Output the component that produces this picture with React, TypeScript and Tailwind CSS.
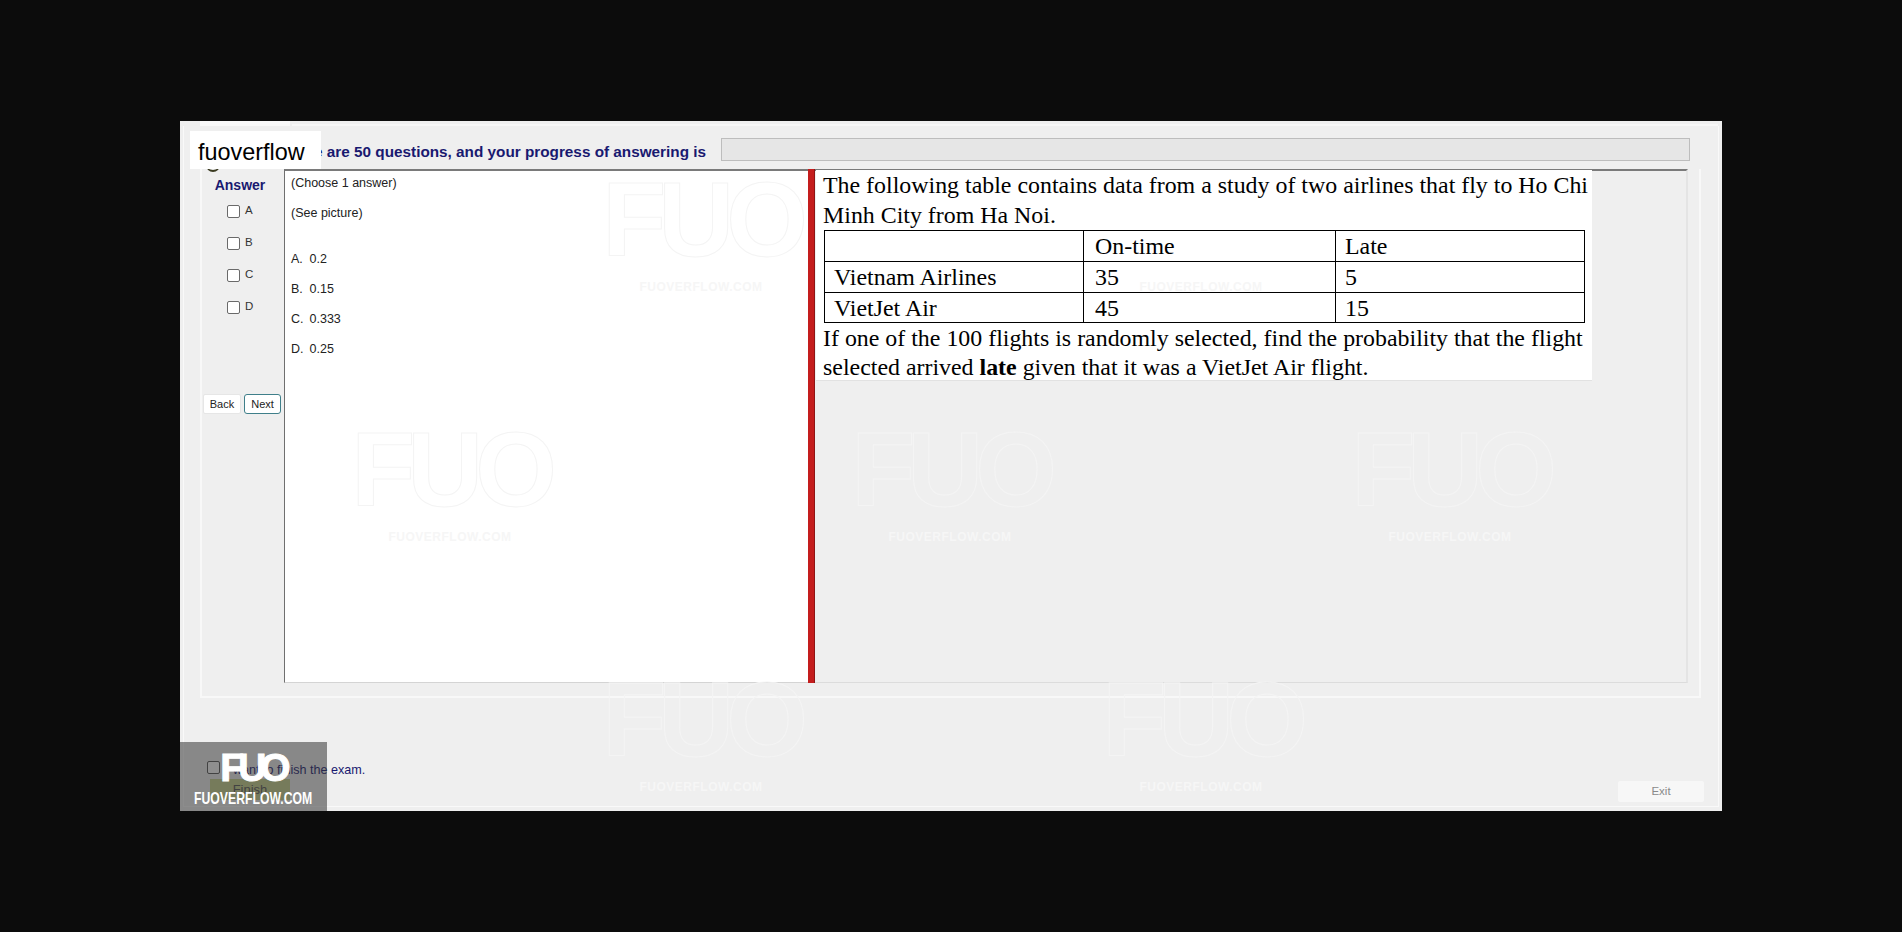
const arial = "font-['Liberation_Sans',Arial,sans-serif]";

function Watermark({ className, labelOnly }: { className: string; labelOnly?: boolean }) {
  return (
    <div className={`absolute w-[200px] flex flex-col items-center justify-end h-[125px] pointer-events-none select-none ${className}`}>
      {!labelOnly && (
        <span className="font-['Liberation_Sans',sans-serif] font-bold text-[105px] leading-[100px] tracking-[-8px] text-transparent [-webkit-text-stroke:1px_#f4f4f4]">
          FUO
        </span>
      )}
      <span className="font-['Liberation_Sans',sans-serif] font-bold text-[12px] leading-4 mt-[9px] tracking-[0.5px] text-[#f6f6f6]">
        FUOVERFLOW.COM
      </span>
    </div>
  );
}

function AnswerOption({ label }: { label: string }) {
  return (
    <div className="h-8 flex items-center gap-[5px] pl-[25px]">
      <span className="w-[13px] h-[13px] rounded-[2px] border border-[#6a6a6a] bg-white" />
      <span className="text-[11.5px] text-[#333]">{label}</span>
    </div>
  );
}

export default function App() {
  const choices = [
    ["A.", "0.2"],
    ["B.", "0.15"],
    ["C.", "0.333"],
    ["D.", "0.25"],
  ];

  return (
    <div className="min-h-[932px] bg-[#0c0c0c] pt-[121px] pl-[180px]">
      <div className={`relative w-[1542px] h-[690px] bg-[#efefef] flex flex-col overflow-hidden ${arial}`}>
        {/* tab strip */}
        <div className="h-[5px] flex items-end gap-[2px] pl-5 shrink-0">
          <div className="h-[5px] w-[90px] bg-[#f9f9f9]" />
          <div className="h-[2px] flex-1 mr-[4px] bg-[#f7f7f7]" />
        </div>

        {/* header row */}
        <div className="h-[23px] mt-[12px] flex items-center justify-end pr-[32px] gap-[15px] shrink-0">
          <span className="text-[15.3px] mt-[6px] font-bold text-[#191970] whitespace-nowrap">
            There are 50 questions, and your progress of answering is
          </span>
          <div className="w-[969px] h-[23px] bg-[#e6e6e6] border border-[#bdbdbd]" />
        </div>

        {/* main group box */}
        <div className="mx-[20px] mt-[8px] w-[1501px] h-[529px] border-b-2 border-r-2 border-l-2 border-[#f8f8f8] flex shrink-0">
          <div className="w-[82px] shrink-0 flex flex-col">
            <div className="text-[14px] font-bold text-[#191970] text-center pr-[6px] pt-[6px] h-[26px]">Answer</div>
            <div className="flex flex-col">
              {["A", "B", "C", "D"].map((label) => (
                <AnswerOption key={label} label={label} />
              ))}
            </div>
            <div className="mt-[71px] flex gap-[3px] pl-[1px]">
              <button className="w-[38px] h-[20px] bg-white rounded-[2px] border border-[#e6e6e6] text-[11px] text-[#222]">Back</button>
              <button className="w-[37px] h-[20px] bg-white rounded-[3px] border border-[#3f7f8a] text-[11px] text-[#222]">Next</button>
            </div>
          </div>

          <div className="w-[524px] h-[514px] shrink-0 bg-white border-l border-t-2 border-t-[#7a7a7a] border-l-[#6f6f6f] border-b border-b-[#d4d4d4] pl-[6px] text-[12.5px] text-[#222]">
            <p className="leading-[15px] mt-[5px]">(Choose 1 answer)</p>
            <p className="leading-[15px] mt-[15px]">(See picture)</p>
            <div className="mt-[31px] flex flex-col gap-[15px]">
              {choices.map(([letter, value]) => (
                <p key={letter} className="leading-[15px] flex">
                  <span className="w-[18.5px]">{letter}</span>
                  <span>{value}</span>
                </p>
              ))}
            </div>
          </div>

          <div className="w-[7px] h-[514px] shrink-0 bg-[#c41d1d] border-r border-r-[#8f1414]" />

          <div className="w-[873px] h-[514px] shrink-0 border-t-2 border-t-[#7a7a7a] border-r-2 border-r-[#e4e4e4] border-b border-b-[#dcdcdc]">
            <div className="w-[776px] h-[211px] bg-white ml-[1px] pl-[7px] pr-[7px] border-b border-[#e2e2e2] font-['Liberation_Serif','Times_New_Roman',serif] text-[23.9px] leading-[30px] text-black">
              <p className="whitespace-nowrap -mt-px">The following table contains data from a study of two airlines that fly to Ho Chi</p>
              <p className="whitespace-nowrap">Minh City from Ha Noi.</p>
              <table className="w-[761px] ml-[1px] border-collapse border border-black table-fixed leading-[28px]">
                <tbody>
                  <tr className="h-[31px]">
                    <td className="w-[259px] border border-black pl-[9px]"></td>
                    <td className="w-[252px] border border-black pl-[11px]">On-time</td>
                    <td className="border border-black pl-[9px]">Late</td>
                  </tr>
                  <tr className="h-[31px]">
                    <td className="border border-black pl-[9px]">Vietnam Airlines</td>
                    <td className="border border-black pl-[11px]">35</td>
                    <td className="border border-black pl-[9px]">5</td>
                  </tr>
                  <tr className="h-[30px]">
                    <td className="border border-black pl-[9px]">VietJet Air</td>
                    <td className="border border-black pl-[11px]">45</td>
                    <td className="border border-black pl-[9px]">15</td>
                  </tr>
                </tbody>
              </table>
              <p className="whitespace-nowrap">If one of the 100 flights is randomly selected, find the probability that the flight</p>
              <p className="whitespace-nowrap -mt-px">selected arrived <b>late</b> given that it was a VietJet Air flight.</p>
            </div>
          </div>
        </div>

        {/* bottom row */}
        <div className="flex-1 flex items-end justify-between pl-[27px] pr-[18px] pb-[9px]">
          <div className="flex flex-col gap-[2px] mb-[2px]">
            <label className="flex items-center gap-[6px] text-[12.6px] text-[#191970]">
              <span className="w-[13px] h-[13px] rounded-[2px] border border-[#555] bg-white" />
              <span className="translate-y-[3px]">I want to finish the exam.</span>
            </label>
            <button className="w-[80px] h-[21px] ml-[3px] bg-[#c8d28c] text-[13px] text-[#555]">Finish</button>
          </div>
          <button className="w-[86px] h-[21px] bg-[#f7f7f7] rounded-[2px] text-[11.5px] text-[#8a8a8a]">Exit</button>
        </div>

        {/* window edge line */}
        <div className="absolute left-[3px] right-[3px] top-[5px] bottom-[4px] border-l border-r border-b border-[#f9f9f9] pointer-events-none" />

        {/* fuoverflow overlays */}
        <Watermark className="left-[421px] top-[49px]" />
        <Watermark className="left-[170px] top-[299px]" />
        <Watermark className="left-[670px] top-[299px]" />
        <Watermark className="left-[1170px] top-[299px]" />
        <Watermark className="left-[921px] top-[49px]" labelOnly />
        <Watermark className="left-[421px] top-[549px]" />
        <Watermark className="left-[921px] top-[549px]" />

        <div className="absolute left-[26px] top-[36px] w-[14px] h-[15px] rounded-full border-b-2 border-[#3a3a20]" />
        <div className="absolute left-[10px] top-[10px] w-[131px] h-[38px] bg-white flex items-center pl-[8px] pt-[6px] text-[23.4px] text-black">
          fuoverflow
        </div>

        <div className="absolute left-0 bottom-0 w-[147px] h-[69px] bg-[#333333]/55 flex flex-col items-center">
          <span className="font-bold text-[39px] leading-[40px] tracking-[-6px] text-white mt-[6px] pr-[2px] [-webkit-text-stroke:1px_white]">FUO</span>
          <span className="font-bold text-[17px] leading-[16px] mt-[3px] text-white whitespace-nowrap scale-x-[0.72]">FUOVERFLOW.COM</span>
        </div>
      </div>
    </div>
  );
}
